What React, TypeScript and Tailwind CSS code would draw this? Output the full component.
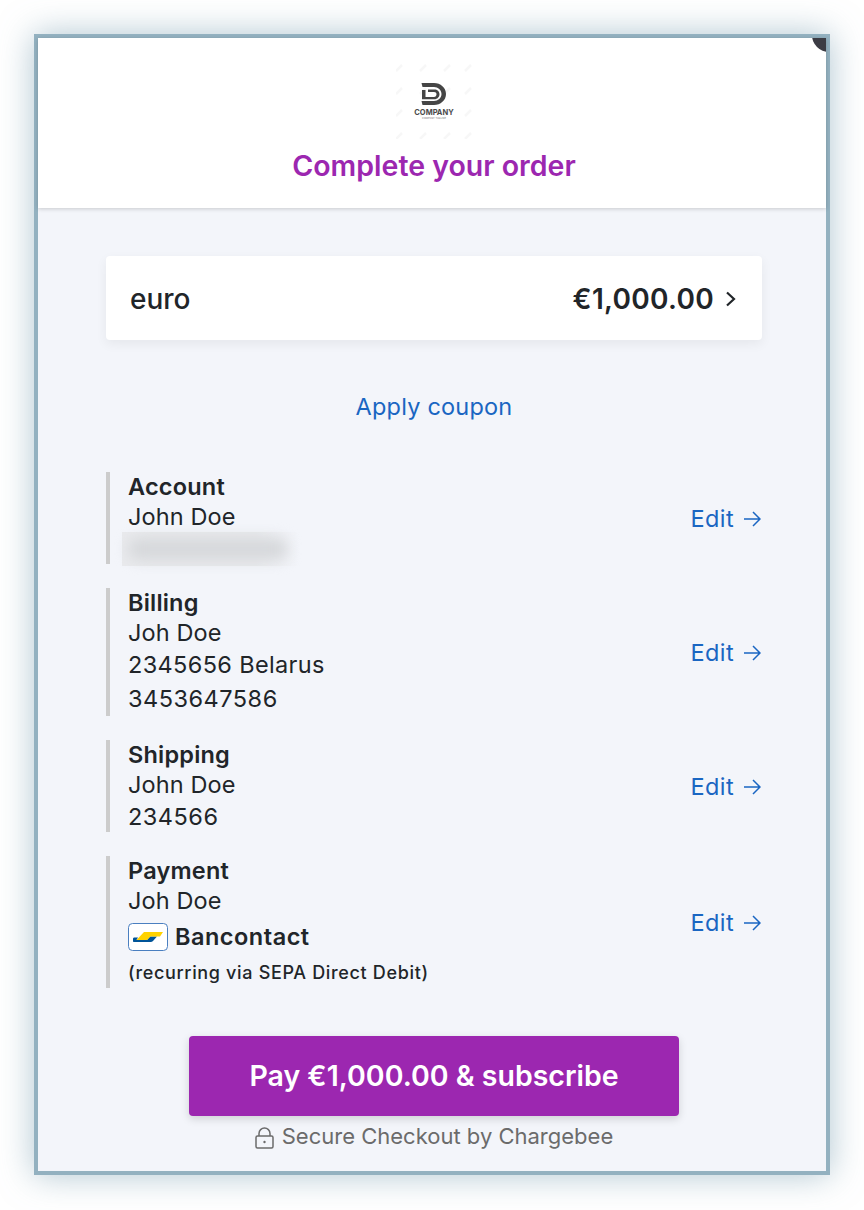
const font = { fontFamily: "Inter, 'Liberation Sans', sans-serif" };

// faint watermark marks around the logo
const marks = [
  [3, 5], [27, 5], [51, 5], [72, 5],
  [3, 28], [27, 28], [51, 28], [72, 28],
  [3, 50], [27, 50], [51, 50], [72, 50],
  [3, 73], [27, 73], [51, 73], [72, 73],
];

function Logo() {
  return (
    <div className="relative flex h-[76px] w-[76px] flex-col items-center pt-[19px]">
      <svg className="absolute top-0 left-0 h-[76px] w-[76px]" viewBox="0 0 76 76" fill="none">
        {marks.map(([x, y]) => (
          <path key={`${x}-${y}`} d={`M${x - 3} ${y + 3}L${x + 3} ${y - 3}`} stroke="#f7f7f7" strokeWidth="2.500" />
        ))}
      </svg>
      <svg className="relative h-[24px] w-[26px]" viewBox="0 0 26 24" fill="none">
        <path d="M0.500 1H13c6.500 0 12 4.700 12 11s-5.500 11-12 11H1.500L0.500 19H13c4 0 7.500-3 7.500-7S17 5 13 5H1.500z" fill="#454545" />
        <path d="M1 8h3.500v7H13c1.500 0 2.500-1.200 2.500-2.700S14.500 10 13 10H7V7.500h6.500c2.700 0 5 2 5 4.800s-2.300 5-5 5H1z" fill="#454545" />
      </svg>
      <span className="relative mt-[3px] text-[7.500px] leading-[8px] font-bold text-[#4a4a4a]">COMPANY</span>
      <span className="relative text-[2.500px] leading-[3px] text-[#777777]">COMPANY TAGLINE</span>
    </div>
  );
}

function BancontactIcon() {
  return (
    <svg className="h-[28px] w-[40px]" viewBox="0 0 40 28" fill="none">
      <rect x="0.500" y="0.500" width="39" height="27" rx="4" fill="#ffffff" stroke="#4a7fc0" />
      <path d="M5 16c0-1 .5-1.500 1.500-1.500H10l-1.500 2.500H19l3-3.500h7l-4 4.500c-.6.700-1.300 1-2.300 1H6c-.6 0-1-.4-1-1z" fill="#005498" />
      <path d="M16 9h19l-3 4.500h-9.500L19 17H8.500z" fill="#ffd200" />
    </svg>
  );
}

function EditLink() {
  return (
    <a className="flex items-center gap-[9px] pt-[2px] pr-[1px] text-[23.500px] leading-[32px] tracking-[0.4px] text-[#1a66c2]">
      Edit
      <svg className="h-[18px] w-[18px]" viewBox="0 0 18 18" fill="none" stroke="#1a66c2" strokeWidth="1.500">
        <path d="M1 9h16M10 2l7 7-7 7" />
      </svg>
    </a>
  );
}

function Row({ title, children }: { title: string; children: React.ReactNode }) {
  return (
    <div className="flex items-center justify-between border-l-4 border-[#cccccc] pl-[18px]">
      <div className="text-[23.500px] leading-[32px] tracking-[0.1px] text-[#212529]">
        <div className="h-[29px] leading-[30px] font-semibold tracking-[0.2px]">{title}</div>
        {children}
      </div>
      <EditLink />
    </div>
  );
}

export default function App() {
  return (
    <div className="h-[1210px] w-[864px] overflow-hidden bg-white pt-[34px] pl-[34px]" style={font}>
      <div className="relative h-[1141px] w-[796px] border-4 border-[#93b1c0] bg-[#f3f5fa] shadow-[0_0_32px_rgba(110,150,170,0.55)]">
        <div className="absolute top-0 right-0 h-[14px] w-[14px] overflow-hidden">
          <div className="absolute -top-[20px] -right-[20px] h-[34px] w-[34px] rounded-full bg-[#3c3c44]" />
        </div>
        <header className="flex h-[170px] flex-col items-center bg-white pt-[25px] pl-[4px] shadow-[0_1px_4px_rgba(0,0,0,0.18)]">
          <Logo />
          <h1 className="mt-[10px] text-[28.500px] leading-[34px] font-semibold text-[#9c27b0]">Complete your order</h1>
        </header>
        <main className="pr-[64px] pl-[68px]">
          <div className="mt-[48px] flex h-[84px] items-center justify-between rounded-[4px] bg-white pt-[1px] pr-[25px] pl-[24px] text-[#212529] shadow-[0_4px_12px_rgba(0,0,0,0.06)]">
            <span className="text-[28px] font-medium">euro</span>
            <span className="flex items-center gap-[11px] text-[28px] font-semibold tracking-[0.3px]">
              €1,000.00
              <svg className="h-[16px] w-[12px]" viewBox="0 0 12 16" fill="none" stroke="#212529" strokeWidth="2.200">
                <path d="M2 1.500 9 8l-7 6.500" />
              </svg>
            </span>
          </div>
          <div className="mt-[51px] text-center text-[23.500px] leading-[32px] tracking-[0.2px] text-[#1a66c2]">Apply coupon</div>
          <div className="mt-[49px] flex flex-col gap-[24px]">
            <Row title="Account">
              <div>John Doe</div>
              <div className="relative h-[31px] w-[170px]">
                <div className="absolute top-[-1px] left-[-6px] h-[34px] w-[178px] bg-gradient-to-r from-[#e9eaed] from-75% to-[#f3f5fa]" />
                <div className="absolute top-[5px] left-[0px] h-[22px] w-[160px] rounded-full bg-[#d6d8db] blur-[7px]" />
              </div>
            </Row>
            <Row title="Billing">
              <div>Joh Doe</div>
              <div className="tracking-[0.35px]">2345656 Belarus</div>
              <div className="h-[35px] pt-[2px] tracking-[0.5px]">3453647586</div>
            </Row>
            <Row title="Shipping">
              <div>John Doe</div>
              <div className="h-[31px] tracking-[0.5px]">234566</div>
            </Row>
            <Row title="Payment">
              <div className="h-[32px]">Joh Doe</div>
              <div className="flex h-[40px] items-center gap-[7px] font-semibold tracking-[0.5px]">
                <BancontactIcon />
                Bancontact
              </div>
              <div className="h-[31px] pt-[1px] text-[18px] leading-[30px] font-medium tracking-[0.66px]">(recurring via SEPA Direct Debit)</div>
            </Row>
          </div>
          <div className="mt-[48px] flex flex-col items-center">
            <button className="h-[80px] w-[490px] rounded-[4px] bg-[#9c27b0] text-[28.500px] font-semibold text-white shadow-[0_3px_8px_rgba(0,0,0,0.15)]">
              Pay €1,000.00 &amp; subscribe
            </button>
            <div className="mt-[4px] flex items-center gap-[8px] text-[22px] leading-[32px] text-[#6b6b6b]">
              <svg className="mb-[-3px] h-[22px] w-[19px]" viewBox="0 0 19 22" fill="none" stroke="#6b6b6b" strokeWidth="1.500">
                <rect x="1" y="9" width="17" height="12" rx="1.500" />
                <path d="M4 9V6.500a5.500 5.500 0 0 1 11 0V9" />
                <circle cx="9.500" cy="15" r="1.200" fill="#6b6b6b" stroke="none" />
              </svg>
              Secure Checkout by Chargebee
            </div>
          </div>
        </main>
      </div>
    </div>
  );
}
